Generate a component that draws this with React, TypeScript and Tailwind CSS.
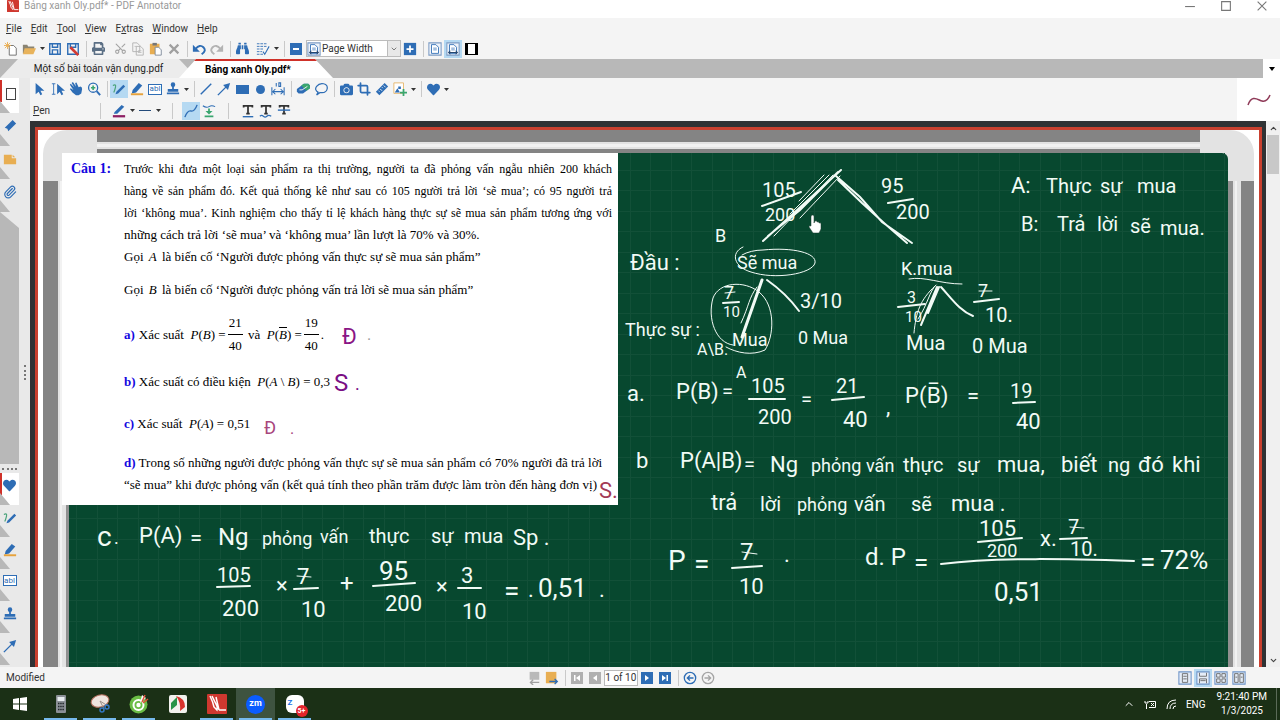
import type { ReactNode } from "react";
import { FaBinoculars, FaCamera, FaHeart, FaPrint } from "react-icons/fa";
import { ChevronDown, ChevronUp, Crop, Paperclip, Scissors } from "lucide-react";

type Stroke = { x: number; y: number; size: number; text: string; color?: string };

// Handwritten words, placed freely on the page by their baseline.
const chalk: Stroke[] = [
  { x: 762, y: 197, size: 20, text: "105" },
  { x: 765, y: 221, size: 18, text: "200" },
  { x: 881, y: 193, size: 20, text: "95" },
  { x: 896, y: 219, size: 20, text: "200" },
  { x: 715, y: 242, size: 18, text: "B" },
  { x: 630, y: 270, size: 22, text: "Đầu :" },
  { x: 737, y: 269, size: 18, text: "Sẽ mua" },
  { x: 901, y: 275, size: 18, text: "K.mua" },
  { x: 724, y: 299, size: 18, text: "7" },
  { x: 723, y: 317, size: 15, text: "10" },
  { x: 800, y: 308, size: 20, text: "3/10" },
  { x: 907, y: 303, size: 16, text: "3" },
  { x: 905, y: 322, size: 15, text: "10" },
  { x: 978, y: 297, size: 18, text: "7" },
  { x: 985, y: 322, size: 20, text: "10." },
  { x: 625, y: 336, size: 18, text: "Thực sự :" },
  { x: 697, y: 355, size: 16, text: "A\\B." },
  { x: 732, y: 346, size: 18, text: "Mua" },
  { x: 798, y: 344, size: 18, text: "0 Mua" },
  { x: 906, y: 350, size: 20, text: "Mua" },
  { x: 972, y: 353, size: 20, text: "0 Mua" },
  { x: 1011, y: 193, size: 22, text: "A:" },
  { x: 1046, y: 193, size: 20, text: "Thực" },
  { x: 1100, y: 193, size: 20, text: "sự" },
  { x: 1137, y: 193, size: 20, text: "mua" },
  { x: 1021, y: 231, size: 20, text: "B:" },
  { x: 1057, y: 231, size: 20, text: "Trả" },
  { x: 1097, y: 231, size: 20, text: "lời" },
  { x: 1130, y: 233, size: 20, text: "sẽ" },
  { x: 1160, y: 235, size: 20, text: "mua." },
  { x: 627, y: 401, size: 22, text: "a." },
  { x: 676, y: 399, size: 22, text: "P(B)" },
  { x: 722, y: 398, size: 20, text: "=" },
  { x: 736, y: 378, size: 16, text: "A" },
  { x: 751, y: 393, size: 20, text: "105" },
  { x: 758, y: 424, size: 20, text: "200" },
  { x: 801, y: 406, size: 20, text: "=" },
  { x: 836, y: 393, size: 20, text: "21" },
  { x: 843, y: 427, size: 22, text: "40" },
  { x: 886, y: 414, size: 22, text: "," },
  { x: 905, y: 403, size: 22, text: "P(B̅)" },
  { x: 967, y: 403, size: 22, text: "=" },
  { x: 1010, y: 398, size: 20, text: "19" },
  { x: 1016, y: 429, size: 22, text: "40" },
  { x: 636, y: 468, size: 22, text: "b" },
  { x: 680, y: 468, size: 22, text: "P(A|B)" },
  { x: 744, y: 471, size: 20, text: "=" },
  { x: 770, y: 472, size: 22, text: "Ng" },
  { x: 811, y: 472, size: 18, text: "phỏng" },
  { x: 866, y: 472, size: 18, text: "vấn" },
  { x: 903, y: 472, size: 20, text: "thực" },
  { x: 957, y: 472, size: 20, text: "sự" },
  { x: 997, y: 472, size: 22, text: "mua," },
  { x: 1061, y: 472, size: 22, text: "biết" },
  { x: 1108, y: 472, size: 20, text: "ng" },
  { x: 1138, y: 472, size: 22, text: "đó" },
  { x: 1172, y: 472, size: 22, text: "khi" },
  { x: 711, y: 510, size: 22, text: "trả" },
  { x: 760, y: 511, size: 20, text: "lời" },
  { x: 797, y: 511, size: 18, text: "phỏng" },
  { x: 854, y: 511, size: 20, text: "vấn" },
  { x: 911, y: 511, size: 20, text: "sẽ" },
  { x: 951, y: 511, size: 22, text: "mua ." },
  { x: 668, y: 570, size: 28, text: "P" },
  { x: 694, y: 573, size: 28, text: "=" },
  { x: 740, y: 560, size: 24, text: "7" },
  { x: 739, y: 594, size: 22, text: "10" },
  { x: 784, y: 562, size: 22, text: "." },
  { x: 865, y: 565, size: 24, text: "d. P" },
  { x: 914, y: 571, size: 26, text: "=" },
  { x: 979, y: 536, size: 22, text: "105" },
  { x: 987, y: 557, size: 18, text: "200" },
  { x: 1040, y: 546, size: 22, text: "x." },
  { x: 1068, y: 534, size: 20, text: "7" },
  { x: 1070, y: 556, size: 20, text: "10." },
  { x: 994, y: 601, size: 26, text: "0,51" },
  { x: 1140, y: 571, size: 28, text: "=" },
  { x: 1160, y: 569, size: 26, text: "72%" },
  { x: 97, y: 546, size: 28, text: "c" },
  { x: 114, y: 544, size: 18, text: "." },
  { x: 139, y: 543, size: 22, text: "P(A)" },
  { x: 190, y: 545, size: 22, text: "=" },
  { x: 218, y: 545, size: 24, text: "Ng" },
  { x: 262, y: 545, size: 18, text: "phỏng" },
  { x: 320, y: 543, size: 18, text: "vấn" },
  { x: 369, y: 543, size: 20, text: "thực" },
  { x: 431, y: 543, size: 20, text: "sự" },
  { x: 464, y: 543, size: 20, text: "mua" },
  { x: 513, y: 545, size: 22, text: "Sp ." },
  { x: 217, y: 582, size: 20, text: "105" },
  { x: 222, y: 616, size: 22, text: "200" },
  { x: 276, y: 593, size: 22, text: "×" },
  { x: 297, y: 584, size: 22, text: "7" },
  { x: 301, y: 617, size: 22, text: "10" },
  { x: 340, y: 591, size: 24, text: "+" },
  { x: 379, y: 580, size: 26, text: "95" },
  { x: 385, y: 611, size: 22, text: "200" },
  { x: 436, y: 594, size: 22, text: "×" },
  { x: 461, y: 583, size: 22, text: "3" },
  { x: 462, y: 619, size: 22, text: "10" },
  { x: 504, y: 600, size: 28, text: "=" },
  { x: 528, y: 597, size: 22, text: "." },
  { x: 538, y: 597, size: 26, text: "0,51" },
  { x: 599, y: 597, size: 22, text: "." },
];

const pen: Stroke[] = [
  { x: 342, y: 344, size: 22, text: "Đ", color: "#8a1585" },
  { x: 367, y: 340, size: 16, text: ".", color: "#999999" },
  { x: 334, y: 391, size: 24, text: "S", color: "#7a0f85" },
  { x: 355, y: 390, size: 18, text: ".", color: "#7a0f85" },
  { x: 264, y: 434, size: 18, text: "Đ", color: "#a8467c" },
  { x: 290, y: 434, size: 16, text: ".", color: "#a8467c" },
  { x: 599, y: 498, size: 22, text: "S.", color: "#a33a55" },
];

function Ink() {
  return (
    <svg
      className="pointer-events-none absolute top-0 left-0 h-[514px] w-[1158px] overflow-visible"
      viewBox="69 153 1158 514"
      aria-hidden="true"
    >
      <g fill="none" stroke="#f2fbf6" strokeLinecap="round" strokeWidth="2">
        <path d="M841 170 763 241M838 172 800 210 768 236" />
        <path strokeWidth="1" d="M833 175 774 236M840 176 800 218M824 175 799 201M829 175 790 214" />
        <path d="M836 176 860 197 882 222 912 243M838 180 862 203 884 223 907 243" />
        <path d="M762 206 801 192M888 203 913 199" />
        <path strokeWidth="1" d="M743 247C730 253 734 267 751 272C775 280 812 274 815 263C817 253 793 247 763 250C755 250 747 252 742 255" />
        <path d="M762 280 742 337" strokeWidth="3" />
        <path strokeWidth="1" d="M757 287C749 297 749 306 741 323" />
        <path d="M767 280C777 287 788 296 799 311" />
        <path strokeWidth="1" d="M733 345C716 343 707 319 713 298C719 282 744 280 759 292C776 306 774 336 765 350C752 356 737 353 726 347" />
        <path d="M723 303 739 302M898 307 925 304" />
        <path strokeWidth="1" d="M909 279C925 276 940 284 962 284" />
        <path strokeWidth="1" d="M936 285C929 292 928 304 918 319M935 286C920 300 916 312 914 333" />
        <path d="M937 287 921 325M939 287 928 313" />
        <path d="M941 287C952 299 960 311 973 316M974 302 999 299" />
        <path d="M749 399 785 399M832 400 864 397M1013 403 1035 402" />
        <path d="M732 568 762 566M978 542 1022 538M1060 539 1087 538M941 564C1000 557 1070 559 1134 561" />
        <path d="M217 587 250 586M294 589 318 588M373 586 415 583M458 588 481 588" />
        <path
          d="M742 552 757 554M1070 527 1084 528M297 576 311 577M725 293 735 292M979 291 992 291"
          strokeWidth="1"
        />
      </g>
      <g fill="#f2fbf6" className="font-[Roboto,'Noto_Sans',sans-serif]">
        {chalk.map((s) => (
          <text key={`${s.x}-${s.y}`} x={s.x} y={s.y} fontSize={s.size}>
            {s.text}
          </text>
        ))}
      </g>
      <g className="font-[Roboto,'Noto_Sans',sans-serif]">
        {pen.map((s) => (
          <text key={`${s.x}-${s.y}`} x={s.x} y={s.y} fontSize={s.size} fill={s.color}>
            {s.text}
          </text>
        ))}
      </g>
      <path
        d="M811 216q2-2 3 0v7l1-2q2-1 2 1 2-1 2 1 2-1 2 1v5l-2 4h-6l-4-6q0-2 2-1z"
        fill="#fff"
        stroke="#16352a"
        strokeWidth=".5"
      />
    </svg>
  );
}

function Icon({ children, box = "0 0 16 16" }: { children: ReactNode; box?: string }) {
  return (
    <svg className="size-[14px] shrink-0" viewBox={box} fill="none" stroke="#2e6db5" strokeWidth="1.6">
      {children}
    </svg>
  );
}

function Tool({ label, active, children }: { label: string; active?: boolean; children: ReactNode }) {
  return (
    <button
      aria-label={label}
      className={`flex h-[18px] w-[18px] shrink-0 items-center justify-center text-[#2e6db5] ${active ? "bg-[#b5d9f2]" : ""}`}
    >
      {children}
    </button>
  );
}

function Caret() {
  return (
    <button aria-label="More" className="flex h-[18px] w-2 shrink-0 items-center justify-center">
      <svg className="h-[3px] w-[5px]" viewBox="0 0 5 3">
        <path d="M0 0h5L2.500 3z" fill="#333" />
      </svg>
    </button>
  );
}

function Sep() {
  return <span className="mr-0.5 ml-1 h-4 w-px shrink-0 bg-[#c9c9c9]" />;
}

const Pencil = () => (
  <Icon>
    <path d="M5 11 13 3l2 2-8 8-3 1z" fill="#2e6db5" stroke="none" />
    <path d="M1 4q4-2 3 2t-2 6" stroke="#4aa37a" strokeWidth="1.3" />
  </Icon>
);
const Marker = () => (
  <Icon>
    <path d="M3 9 10 1l4 3-7 8-5 1z" fill="#2e6db5" stroke="none" />
    <path d="M1 14h14" stroke="#e6a23c" strokeWidth="2.2" />
  </Icon>
);
const TextBox = () => (
  <span className="flex h-[11px] w-[14px] items-center justify-center border border-[#2e6db5] bg-white text-[8px] leading-none text-[#2e6db5]">
    abl
  </span>
);
const Stamp = () => (
  <Icon>
    <circle cx="8" cy="3" r="2.6" fill="#2e6db5" stroke="none" />
    <path d="M7 4h2v4h5v3H2V8h5zM1 12h14v2H1z" fill="#2e6db5" stroke="none" />
  </Icon>
);
const Arrow = () => (
  <Icon>
    <path d="M1 15 11 5" />
    <path d="M15 1 12.500 9 7 3.500z" fill="#2e6db5" stroke="none" />
  </Icon>
);
const PageIcon = ({ wide }: { wide?: boolean }) => (
  <Icon>
    <path d="M1 1h14v14H1z" stroke="#7d9cc4" fill="#eef3fa" strokeWidth="1.2" />
    <path d="M4 3h5l3 3v7H4z" fill="#fff" strokeWidth="1" />
    <path d="M6 7h4M6 9h4" strokeWidth=".8" />
    {wide && <path d="M3 12h10M5 10l-2 2 2 2M11 10l2 2-2 2" stroke="#27476f" strokeWidth="1.200" />}
  </Icon>
);

function MainToolbar() {
  return (
    <div className="flex h-[21px] items-center bg-[#f4f4f4] pl-0.5">
      <Tool label="New">
        <Icon>
          <path d="M6 4h5l3 3v8H6z" fill="#fff" stroke="#666" strokeWidth="1" />
          <path d="M4 0v8M0 4h8M1 1l6 6M7 1 1 7" stroke="#e9ab4d" strokeWidth="1" />
        </Icon>
      </Tool>
      <Tool label="Open">
        <Icon>
          <path d="M1 13V3h5l1 2h7v3" stroke="none" fill="#8a8473" />
          <path d="M3 7h13l-3 7H1z" fill="#e8b35c" stroke="none" />
        </Icon>
      </Tool>
      <Caret />
      <Tool label="Save">
        <Icon>
          <path d="M2 2h12v12H2zM5 2v4h6V2M5 14V9h6v5" />
        </Icon>
      </Tool>
      <Tool label="Save as">
        <Icon>
          <path d="M2 2h12v12H2zM5 2v4h6V2" />
          <path d="m5 6 9 9" stroke="#d23b34" strokeWidth="3" />
        </Icon>
      </Tool>
      <Sep />
      <Tool label="Print">
        <FaPrint size={13} color="#5b6f85" />
      </Tool>
      <span className="w-1" />
      <Tool label="Cut">
        <Scissors size={13} color="#a3a3a3" className="-rotate-90" />
      </Tool>
      <Tool label="Copy">
        <Icon>
          <path d="M2 1h5l3 3v7H2zM6 5h5l3 3v7H6z" stroke="#b0b0b0" strokeWidth="1" fill="#f4f4f4" />
          <path d="M8 10h4M8 12h4M4 5h2" stroke="#b0b0b0" strokeWidth=".8" />
        </Icon>
      </Tool>
      <Tool label="Paste">
        <Icon>
          <path d="M1 2h11v12H1z" fill="#e8ae52" stroke="none" />
          <path d="M4 1h5v3H4z" fill="#777" stroke="none" />
          <path d="M7 6h4l3 3v6H7z" fill="#fff" stroke="#7a8797" strokeWidth="1" />
        </Icon>
      </Tool>
      <Tool label="Delete">
        <Icon>
          <path d="m3 3 10 10M13 3 3 13" stroke="#a0a0a0" strokeWidth="2.500" />
        </Icon>
      </Tool>
      <Sep />
      <Tool label="Undo">
        <Icon>
          <path d="M4 8q5-6 9-2t-2 8" strokeWidth="2.200" />
          <path d="M1 3v8h8z" fill="#2e6db5" stroke="none" />
        </Icon>
      </Tool>
      <Tool label="Redo">
        <Icon>
          <path d="M12 8Q7 2 3 6t2 8" stroke="#b3b3b3" strokeWidth="2.200" />
          <path d="M15 3v8H7z" fill="#b3b3b3" stroke="none" />
        </Icon>
      </Tool>
      <Sep />
      <Tool label="Find">
        <FaBinoculars size={13} />
      </Tool>
      <span className="w-[3px]" />
      <Tool label="Page list">
        <Icon>
          <path d="M1 2h12M1 5h12M1 8h8M1 11h6M1 14h8" strokeWidth="1" strokeDasharray="3 1" />
          <path d="m8 11 2 3 5-9" strokeWidth="1.200" />
        </Icon>
      </Tool>
      <Caret />
      <Sep />
      <Tool label="Zoom out">
        <span className="flex size-3 items-center justify-center bg-[#2e6db5]">
          <span className="h-0.5 w-1.5 bg-white" />
        </span>
      </Tool>
      <label className="relative ml-px flex h-[17px] w-[95px] items-center border border-[#bcbcbc] bg-white">
        <PageIcon wide />
        <select
          aria-label="Zoom"
          className="h-full w-full appearance-none bg-transparent pl-px text-[10px] text-[#333]"
        >
          <option>Page Width</option>
        </select>
        <span className="pointer-events-none absolute inset-y-0 right-0 flex w-[13px] items-center justify-center border-l border-[#bcbcbc] bg-[#e8e8e8]">
          <ChevronDown size={8} color="#444" />
        </span>
      </label>
      <Tool label="Zoom in">
        <Icon>
          <path d="M1 1h14v14H1z" fill="#2e6db5" stroke="none" />
          <path d="M8 4v8M4 8h8" stroke="#fff" strokeWidth="2" />
        </Icon>
      </Tool>
      <Sep />
      <Tool label="Full page">
        <PageIcon />
      </Tool>
      <Tool label="Page width" active>
        <PageIcon wide />
      </Tool>
      <Tool label="Full screen">
        <span className="h-3 w-[13px] border-x-[3px] border-y-[1px] border-black bg-white" />
      </Tool>
    </div>
  );
}

function DocumentTabs() {
  return (
    <div className="flex h-[19px] items-stretch bg-[#b8b8b8]">
      <div className="relative flex min-w-0 flex-1">
        <button className="h-full w-[197px] bg-[#ececec] text-[10px] text-[#222] [clip-path:polygon(18px_0,179px_0,100%_100%,0_100%)]">
          Một số bài toán vận dụng.pdf
        </button>
        <button className="-ml-[18px] h-full w-[154px] border-t-2 border-[#cf3129] bg-white pr-4 text-[10px] font-bold text-black [clip-path:polygon(17px_0,136px_0,100%_100%,0_100%)]">
          Bảng xanh Oly.pdf*
        </button>
      </div>
      <button aria-label="Open documents" className="flex w-[17px] items-center justify-center bg-white">
        <svg className="h-1 w-[6px]" viewBox="0 0 6 4">
          <path d="M0 0h6L3 4z" />
        </svg>
      </button>
    </div>
  );
}

function ToolRow() {
  return (
    <div className="flex h-[22px] items-center pl-px">
      <Tool label="Select">
        <Icon>
          <path d="M3 1v13l3.500-3 2 4 2-1-2-4h4.500z" fill="#2e6db5" stroke="none" />
        </Icon>
      </Tool>
      <Tool label="Select text">
        <Icon>
          <path d="M1 2h4M3 2v12M1 14h4" strokeWidth="1" />
          <path d="M7 2v12l3-3 2 4 2-1-2-4h4z" fill="#2e6db5" stroke="none" />
        </Icon>
      </Tool>
      <Tool label="Pan">
        <Icon>
          <path
            d="M1 3 2 2l4 4-3-5 1.500-1L8 5 7 1l1.500-.5L11 6l2-1q2 0 2 3l-1 5-3 2H8l-4-3-3-4 1-1 3 2z"
            fill="#2e6db5"
            stroke="none"
          />
        </Icon>
      </Tool>
      <Tool label="Magnify">
        <Icon>
          <circle cx="7" cy="6.500" r="5.200" strokeWidth="1.500" />
          <path d="m11 10.500 4 4.500" strokeWidth="2.200" />
          <path d="M7 4v5M4.500 6.500h5" stroke="#3aa66f" strokeWidth="1.800" />
        </Icon>
      </Tool>
      <Sep />
      <Tool label="Pen" active>
        <Pencil />
      </Tool>
      <Tool label="Marker">
        <Marker />
      </Tool>
      <Tool label="Text">
        <TextBox />
      </Tool>
      <Tool label="Stamp">
        <Stamp />
      </Tool>
      <Caret />
      <Sep />
      <Tool label="Line">
        <Icon>
          <path d="M2 14 14 2" />
        </Icon>
      </Tool>
      <Tool label="Arrow">
        <Arrow />
      </Tool>
      <Tool label="Rectangle">
        <span className="h-[9px] w-[13px] bg-[#2e6db5]" />
      </Tool>
      <Tool label="Ellipse">
        <span className="size-[9px] rounded-full bg-[#2e6db5]" />
      </Tool>
      <Tool label="Measure">
        <Icon>
          <path d="M1 6v9M15 6v9M2 11h12M5 8l-3 3 3 3M11 8l3 3-3 3M6 1v4M9 1h2v4H9z" strokeWidth="1.200" />
        </Icon>
      </Tool>
      <Sep />
      <Tool label="Eraser">
        <Icon>
          <path d="m1 8 8-6h5l2 2v3l-8 6H3l-2-2z" fill="#2e6db5" stroke="none" />
          <path d="m6 4 3-2h5l2 2v3l-4 3z" fill="#3aa66f" stroke="none" />
          <path d="m4 9 3 0 6-4" stroke="#fff" strokeWidth="1" />
        </Icon>
      </Tool>
      <Tool label="Lasso">
        <Icon>
          <path d="M5 12Q0 9 3 5t8-3 4 6-8 4l-4 3 2-4" strokeWidth="1.400" />
        </Icon>
      </Tool>
      <Sep />
      <Tool label="Snapshot">
        <FaCamera size={13} />
      </Tool>
      <Tool label="Crop">
        <Crop size={14} strokeWidth={3} />
      </Tool>
      <Tool label="Ruler">
        <Icon>
          <path d="M1 11 11 1l4 4L5 15z" fill="#2e6db5" stroke="none" />
          <path d="m4 10 1 1M6 8l2 2M8 6l1 1M10 4l2 2" stroke="#fff" strokeWidth="1" />
        </Icon>
      </Tool>
      <Tool label="Insert image">
        <Icon>
          <path d="M1 1h11v12H1z" stroke="#e6b566" strokeWidth="1" fill="#fff" />
          <path d="m2 12 3-5 3 5zM6 5h3v3H6z" fill="#2e6db5" stroke="none" />
          <path d="M12 8v8M8 12h8" stroke="#3aa66f" strokeWidth="2" />
        </Icon>
      </Tool>
      <Caret />
      <Sep />
      <Tool label="Favorites">
        <FaHeart size={13} />
      </Tool>
      <Caret />
    </div>
  );
}

function PenRow() {
  return (
    <div className="flex h-[21px] items-center pl-[3px]">
      <span className="w-[63px] text-[10px] text-[#333]">
        <u>P</u>en
      </span>
      <Sep />
      <span className="w-[7px]" />
      <Tool label="Pen color">
        <Icon>
          <path d="M3 9 11 1l3 2-8 8-4 0z" fill="#2e6db5" stroke="none" />
          <path d="M1 14h14" stroke="#8e1f63" strokeWidth="2.600" />
        </Icon>
      </Tool>
      <Caret />
      <Tool label="Pen width">
        <span className="h-px w-3 bg-[#234a7a]" />
      </Tool>
      <Caret />
      <span className="w-1.5" />
      <Sep />
      <span className="w-[7px]" />
      <Tool label="Smooth" active>
        <Icon>
          <path d="M1 15Q4 7 8 8t7-7" />
        </Icon>
      </Tool>
      <Tool label="Pressure">
        <Icon>
          <path d="M1 2q4 3 7 1t7 0" strokeWidth="1.200" />
          <path d="M8 5v4M3 14h10" stroke="#3aa66f" strokeWidth="2" />
          <path d="M4 8h8l-4 4z" fill="#3aa66f" stroke="none" />
        </Icon>
      </Tool>
      <span className="w-1.5" />
      <Sep />
      <span className="w-2" />
      {["Underline", "Wavy underline", "Strikethrough"].map((label, i) => (
        <Tool key={label} label={label}>
          <Icon>
            <path d="M3 4V2h10v2M8 2v9M6 11h4" stroke="#333" strokeWidth="2" />
            {i === 0 && <path d="M2 14.500h12" />}
            {i === 1 && <path d="M1 14q2-2 4 0t4 0 5 0" strokeWidth="1.300" />}
            {i === 2 && <path d="M1 7h14" />}
          </Icon>
        </Tool>
      ))}
    </div>
  );
}

function SideTab({ label, active, children }: { label: string; active?: boolean; children: ReactNode }) {
  return (
    <button
      aria-label={label}
      className={`relative flex h-full w-[19px] justify-center pt-1.5 ${active ? "bg-white" : "bg-[#e9e9e9]"}`}
    >
      {active && <span className="absolute top-0 left-0 h-[22px] w-0.5 bg-[#cf3129]" />}
      <svg className="absolute bottom-0 left-0 h-3 w-[10px]" viewBox="0 0 10 12">
        <path d="M0 0 10 12H0z" fill="#b8b8b8" />
      </svg>
      {children}
    </button>
  );
}

function SideBar() {
  return (
    <aside className="flex w-[30px] shrink-0 bg-[#e9e9e9]">
      <div className="flex w-[19px] flex-col bg-[#b8b8b8]">
        <div className="grid shrink-0 auto-rows-[33px] bg-white pt-0.5">
          <SideTab label="Pages" active>
            <span className="mt-0.5 ml-0.5 h-3 w-[10px] border border-[#444] bg-white" />
          </SideTab>
          <SideTab label="Bookmarks">
            <Icon>
              <path d="M2 10 11 1l4 4-9 9-1-3z" fill="#2e6db5" stroke="none" />
            </Icon>
          </SideTab>
          <SideTab label="Annotations">
            <Icon>
              <path d="M1 3h9v4h5v7H1zM11 3l3 3h-3z" fill="#e8ae52" stroke="none" />
            </Icon>
          </SideTab>
          <SideTab label="Attachments">
            <Paperclip size={14} color="#2e6db5" />
          </SideTab>
        </div>
        <svg className="h-4 w-[19px] shrink-0" viewBox="0 0 19 16">
          <path d="M0 0h19v16z" fill="#e9e9e9" />
        </svg>
        <span className="flex-1" />
        <span className="flex h-[9px] shrink-0 items-center justify-center bg-[#e9e9e9]">
          <span className="w-[15px] border-t-2 border-dotted border-[#777]" />
        </span>
        <div className="grid shrink-0 auto-rows-[32px] bg-[#e9e9e9] pb-0.5">
          <SideTab label="Favorites" active>
            <FaHeart size={13} color="#2e6db5" />
          </SideTab>
          <SideTab label="Pen">
            <Pencil />
          </SideTab>
          <SideTab label="Marker">
            <Marker />
          </SideTab>
          <SideTab label="Text">
            <TextBox />
          </SideTab>
          <SideTab label="Stamp">
            <Stamp />
          </SideTab>
          <SideTab label="Arrow">
            <Arrow />
          </SideTab>
        </div>
      </div>
      <div className="flex w-[11px] items-center justify-center">
        <span className="h-[15px] border-l-2 border-dotted border-[#777]" />
      </div>
    </aside>
  );
}

function Frac({ top, bottom }: { top: string; bottom: string }) {
  return (
    <span className="mx-0.5 inline-flex flex-col items-center leading-[22px]">
      <span className="border-b border-black px-px">{top}</span>
      <span>{bottom}</span>
    </span>
  );
}

function Question() {
  return (
    <article className="-ml-[7px] flex h-[352px] w-[556px] bg-white pt-[5px] pr-1.5 pl-[9px] font-['Liberation_Serif',serif] text-[13px] leading-[22px] whitespace-nowrap text-black">
      <h1 className="w-[53px] shrink-0 text-[14px] font-bold text-[#1408e0]">Câu 1:</h1>
      <div className="min-w-0 flex-1">
        <div className="text-[12px] [text-align-last:justify]">
          <p>Trước khi đưa một loại sản phẩm ra thị trường, người ta đã phỏng vấn ngẫu nhiên 200 khách</p>
          <p>hàng về sản phẩm đó. Kết quả thống kê như sau có 105 người trả lời ‘sẽ mua’; có 95 người trả</p>
          <p>lời ‘không mua’. Kinh nghiệm cho thấy tỉ lệ khách hàng thực sự sẽ mua sản phẩm tương ứng với</p>
        </div>
        <p>những cách trả lời ‘sẽ mua’ và ‘không mua’ lần lượt là 70% và 30%.</p>
        <p>
          Gọi <i className="mx-0.5">A</i> là biến cố ‘Người được phỏng vấn thực sự sẽ mua sản phẩm”
        </p>
        <p className="mt-[11px]">
          Gọi <i className="mx-0.5">B</i> là biến cố ‘Người được phỏng vấn trả lời sẽ mua sản phẩm”
        </p>
        <p className="mt-[11px] flex items-center">
          <b className="mr-1 text-[#1408e0]">a)</b>Xác suất&nbsp;&nbsp;
          <i>P</i>(<i>B</i>) =<Frac top="21" bottom="40" />
          &nbsp;và&nbsp;&nbsp;<i>P</i>(<i className="leading-[14px] [border-top:1px_solid]">B</i>) =
          <Frac top="19" bottom="40" />.
        </p>
        <p className="mt-[14px]">
          <b className="text-[#1408e0]">b)</b> Xác suất có điều kiện&nbsp; <i>P</i>(<i>A</i> \ <i>B</i>) = 0,3
        </p>
        <p className="mt-5">
          <b className="text-[#1408e0]">c)</b> Xác suất&nbsp; <i>P</i>(<i>A</i>) = 0,51
        </p>
        <p className="mt-[17px]">
          <b className="text-[#1408e0]">d)</b> Trong số những người được phỏng vấn thực sự sẽ mua sản phẩm có 70% người đã trả lời
        </p>
        <p>“sẽ mua” khi được phỏng vấn (kết quả tính theo phần trăm được làm tròn đến hàng đơn vị)</p>
      </div>
    </article>
  );
}

function DocumentPage() {
  return (
    <main className="flex min-w-0 flex-1 overflow-hidden bg-[#303234] pt-1.5 pr-1 pl-[5px]">
      <div className="flex min-w-0 flex-1 border-x-[3px] border-t-[3px] border-[#c9402f] bg-white px-[5px]">
        <div className="flex min-w-0 flex-1 flex-col rounded-t-[24px] bg-[#e3e3e3]">
          <div className="mr-[54px] ml-[54px] flex h-[23px] shrink-0 flex-col">
            <span className="h-3 bg-[#848484]" />
            <span className="mt-0.5 h-[3px] bg-[#f2f2f2]" />
            <span className="mt-0.5 flex-1 bg-[#848484]" />
          </div>
          <div className="flex min-h-0 flex-1">
            <div className="mt-7 flex w-[26px] shrink-0">
              <span className="w-[15px] bg-[#848484]" />
              <span className="mr-1 ml-[2px] w-0.5 bg-[#f2f2f2]" />
              <span className="flex-1 bg-[#909090]" />
            </div>
            <section className="relative min-w-0 flex-1 rounded-tr-md bg-[#07482f]">
              <svg className="absolute inset-0 size-full" aria-hidden="true">
                <pattern id="grid" width="41" height="41" x="7" y="17" patternUnits="userSpaceOnUse">
                  <path d="M.5 0v41M21.500 0v41M0 .5h41M0 20.500h41" stroke="#125038" />
                </pattern>
                <rect width="100%" height="100%" fill="url(#grid)" />
              </svg>
              <div className="relative">
                <Question />
              </div>
              <Ink />
            </section>
            <div className="mt-7 flex w-[26px] shrink-0">
              <span className="w-[5px] bg-[#909090]" />
              <span className="mr-1 ml-0.5 w-0.5 bg-[#f2f2f2]" />
              <span className="flex-1 bg-[#848484]" />
            </div>
          </div>
        </div>
      </div>
    </main>
  );
}

function ScrollBar() {
  return (
    <div className="flex w-[14px] shrink-0 flex-col items-center bg-[#f0f0f0]">
      <button aria-label="Scroll up" className="flex h-[14px] items-center">
        <ChevronUp size={9} strokeWidth={3} color="#444" />
      </button>
      <span className="h-[39px] w-3 bg-[#c8c8c8]" />
      <span className="flex-1" />
      <button aria-label="Scroll down" className="flex h-[14px] items-center">
        <ChevronDown size={9} strokeWidth={3} color="#444" />
      </button>
    </div>
  );
}

function NavButton({ label, off, d }: { label: string; off?: boolean; d: string }) {
  return (
    <Tool label={label}>
      <svg className={`size-3 ${off ? "bg-[#b0b0b0]" : "bg-[#2e6db5]"}`} viewBox="0 0 12 12">
        <path d={d} fill="#fff" />
      </svg>
    </Tool>
  );
}

function StatusBar() {
  return (
    <footer className="flex h-[21px] shrink-0 items-center bg-[#f4f4f4] text-[10px] text-[#333]">
      <span className="w-[41%] pl-1.5">Modified</span>
      <Tool label="Previous document">
        <Icon>
          <path d="M3 1h11v9H3z" fill="#b9b9b9" stroke="none" />
          <path d="M14 13H4M7 10l-3 3 3 3" stroke="#a0a0a0" />
        </Icon>
      </Tool>
      <Tool label="Next document">
        <Icon>
          <path d="M1 1h12v13H1z" fill="#e8ae52" stroke="none" />
          <path d="M5 12h9M11 9l3 3-3 3" />
        </Icon>
      </Tool>
      <Sep />
      <NavButton label="First page" off d="M3 3h1.500v6H3zM9 3v6L5 6z" />
      <NavButton label="Previous page" off d="M8 3v6L4 6z" />
      <input
        aria-label="Page"
        defaultValue="1 of 10"
        className="h-4 w-[34px] border border-[#bbb] bg-white text-center text-[10px]"
      />
      <NavButton label="Next page" d="M4 3v6l4-3z" />
      <NavButton label="Last page" d="M3 3v6l4-3zM7.500 3H9v6H7.500z" />
      <Sep />
      <Tool label="Back">
        <Icon>
          <circle cx="8" cy="8" r="6.500" strokeWidth="1.500" />
          <path d="M12 8H5M8 5 5 8l3 3" />
        </Icon>
      </Tool>
      <Tool label="Forward">
        <Icon>
          <circle cx="8" cy="8" r="6.500" stroke="#a5a5a5" strokeWidth="1.500" />
          <path d="M4 8h7M8 5l3 3-3 3" stroke="#a5a5a5" />
        </Icon>
      </Tool>
      <div className="ml-auto flex pr-8">
        {[
          "M5 3h6v10H5zM6 6h4M6 9h4",
          "M4 2v4h8V2M4 14V9h8v5M5 11h6",
          "M3 3h4v4H3zM9 3h4v4H9zM3 9h4v4H3zM9 9h4v4H9z",
          "M3 3h4v10H3zM9 3h4v10H9zM4 7h2M10 7h2",
        ].map((d, i) => (
          <Tool key={d} label={`Page layout ${i + 1}`} active={i === 1}>
            <Icon>
              <path d="M1 1h14v14H1z" stroke="#6f95c8" fill="#e4ecf7" strokeWidth="1.200" />
              <path d={d} stroke="#666" strokeWidth="1" />
            </Icon>
          </Tool>
        ))}
      </div>
    </footer>
  );
}

function TaskButton({ label, open, active, children }: { label: string; open?: boolean; active?: boolean; children: ReactNode }) {
  return (
    <button
      aria-label={label}
      className={`relative flex w-[39px] items-center justify-center ${active ? "bg-[#3e5340]" : ""}`}
    >
      {children}
      {open && <span className="absolute inset-x-[3px] bottom-0 h-0.5 bg-[#76b9ed]" />}
    </button>
  );
}

const PdfLogo = ({ big }: { big?: boolean }) => (
  <svg className={big ? "size-5" : "size-3"} viewBox="0 0 20 20">
    <rect width="20" height="20" rx="1" fill="#cf382f" />
    <path d="M3 2q3 6 4 11l3 3q1-3-1-6L5 2M9 3l3 13M12 16h7" fill="none" stroke="#fff" strokeWidth="1.500" />
  </svg>
);

function TaskBar() {
  return (
    <div className="flex h-8 shrink-0 bg-[#1b3016] text-[10px] text-white">
      <TaskButton label="Start">
        <svg className="size-[14px]" viewBox="0 0 14 14">
          <path d="M0 2 6 1v5.500H0zM7 1l7-1v6.500H7zM0 7.500h6V13l-6-1zM7 7.500h7V14l-7-1z" fill="#fff" />
        </svg>
      </TaskButton>
      <span className="w-0.5" />
      <TaskButton label="Calculator" open>
        <svg className="h-[18px] w-[10px]" viewBox="0 0 10 18">
          <rect width="10" height="18" rx="1" fill="#8b9096" />
          <path d="M1.500 2h7v4h-7z" fill="#e7ecef" />
          <path d="M2 8.500h6M2 11.500h6M2 14.500h6" stroke="#22282c" strokeWidth="1.500" strokeDasharray="1.500 .7" />
        </svg>
      </TaskButton>
      <TaskButton label="Snipping tool" open>
        <svg className="size-5" viewBox="0 0 20 20">
          <ellipse cx="10" cy="7" rx="9" ry="6" fill="#efe5df" stroke="#b5705f" transform="rotate(-15 10 7)" />
          <path d="m10 7 4 8M10 7l8 5" stroke="#9a8f8a" />
          <circle cx="12" cy="16" r="2" fill="none" stroke="#3276c3" strokeWidth="1.500" />
          <circle cx="17" cy="13" r="2" fill="none" stroke="#3276c3" strokeWidth="1.500" />
        </svg>
      </TaskButton>
      <TaskButton label="Coc Coc" open>
        <svg className="size-5" viewBox="0 0 20 20">
          <circle cx="9.500" cy="10.500" r="9" fill="#6bbd45" />
          <circle cx="9.500" cy="11" r="5" fill="none" stroke="#fff" strokeWidth="2" />
          <circle cx="9.500" cy="11" r="2.200" fill="#fff" />
          <path d="m11 9 2-8 4 3z" fill="#fff" />
          <path d="m13 8 3-7M14 9l5-4" stroke="#e0513b" strokeWidth="1.500" />
        </svg>
      </TaskButton>
      <TaskButton label="Drawing app">
        <svg className="size-[18px]" viewBox="0 0 18 18">
          <rect width="18" height="18" rx="2" fill="#f2f2ee" />
          <path d="M2 15V8l6-6v8z" fill="#279447" />
          <path d="M7 1q9 2 9 11l-5 4Q12 7 7 1z" fill="#d8332d" />
        </svg>
      </TaskButton>
      <TaskButton label="PDF Annotator" open>
        <PdfLogo big />
      </TaskButton>
      <TaskButton label="Zoom" open active>
        <span className="flex size-[19px] items-center justify-center rounded-full bg-[#0b5cff] pb-0.5 text-[9px] leading-none font-bold">
          zm
        </span>
      </TaskButton>
      <TaskButton label="Zalo" open>
        <span className="relative flex size-[18px] rounded-md bg-white pt-1 pl-0.5 text-[8px] leading-none font-bold text-[#1671e6]">
          Z
          <span className="absolute -right-1 -bottom-1 flex size-3 items-center justify-center rounded-full bg-[#e3242b] text-[7px] text-white">
            5+
          </span>
        </span>
      </TaskButton>
      <div className="ml-auto flex items-center gap-[9px] pr-[3px]">
        <ChevronUp size={12} />
        <svg className="h-[9px] w-[13px]" viewBox="0 0 13 9" fill="none" stroke="#fff">
          <path d="M5 1.500h6.500v6H5M2.500 4v5M1 1v2h3V1M7 3l3 3M10 3 7 6" />
        </svg>
        <svg className="size-[11px]" viewBox="0 0 11 11" fill="none" stroke="#fff">
          <path d="M1 10Q1 1 10 1M4 10q0-6 6-6M7 10q0-3 3-3" />
        </svg>
        <span>ENG</span>
        <div className="flex flex-col items-end pl-0.5 leading-[14px]">
          <time>9:21:40 PM</time>
          <time className="pr-1">1/3/2025</time>
        </div>
        <span className="h-8 w-px bg-[#5b6b58]" />
      </div>
    </div>
  );
}

export default function App() {
  return (
    <div className="flex h-screen w-full flex-col overflow-hidden bg-[#f4f4f4] font-[Roboto,'Noto_Sans',sans-serif]">
      <header className="flex h-[18px] shrink-0 items-start bg-white pl-[7px] text-[10px] leading-[12px] text-[#999]">
        <PdfLogo />
        <span className="pl-[5px]">Bảng xanh Oly.pdf* - PDF Annotator</span>
        <div className="ml-auto flex gap-6 pr-3 text-[#777]">
          {["M1 6h9", "M1.500 1.500h8v8h-8z", "m1.500 1.500 8 8M9.500 1.500l-8 8"].map((d, i) => (
            <button key={d} aria-label={["Minimize", "Maximize", "Close"][i]}>
              <svg className="size-3" viewBox="0 0 11 11" fill="none" stroke="currentColor">
                <path d={d} />
              </svg>
            </button>
          ))}
        </div>
      </header>
      <nav className="flex h-5 shrink-0 items-center gap-[9px] pl-1.5 text-[10px] text-[#333]">
        {[
          ["", "F", "ile"],
          ["", "E", "dit"],
          ["", "T", "ool"],
          ["", "V", "iew"],
          ["E", "x", "tras"],
          ["", "W", "indow"],
          ["", "H", "elp"],
        ].map(([pre, key, rest]) => (
          <button key={rest}>
            {pre}
            <u>{key}</u>
            {rest}
          </button>
        ))}
      </nav>
      <MainToolbar />
      <DocumentTabs />
      <div className="flex min-h-0 flex-1">
        <SideBar />
        <div className="flex min-w-0 flex-1 flex-col">
          <div className="flex shrink-0">
            <div className="min-w-0 flex-1">
              <ToolRow />
              <PenRow />
            </div>
            <div className="flex w-[43px] items-center justify-center bg-white">
              <svg className="h-3 w-6" viewBox="0 0 24 12" fill="none" stroke="#8f3a58" strokeWidth="1.500">
                <path d="M1 11C5 0 11 6 15 7S21 6 23 1" />
              </svg>
            </div>
          </div>
          <div className="flex min-h-0 flex-1">
            <DocumentPage />
            <ScrollBar />
          </div>
        </div>
      </div>
      <StatusBar />
      <TaskBar />
    </div>
  );
}
